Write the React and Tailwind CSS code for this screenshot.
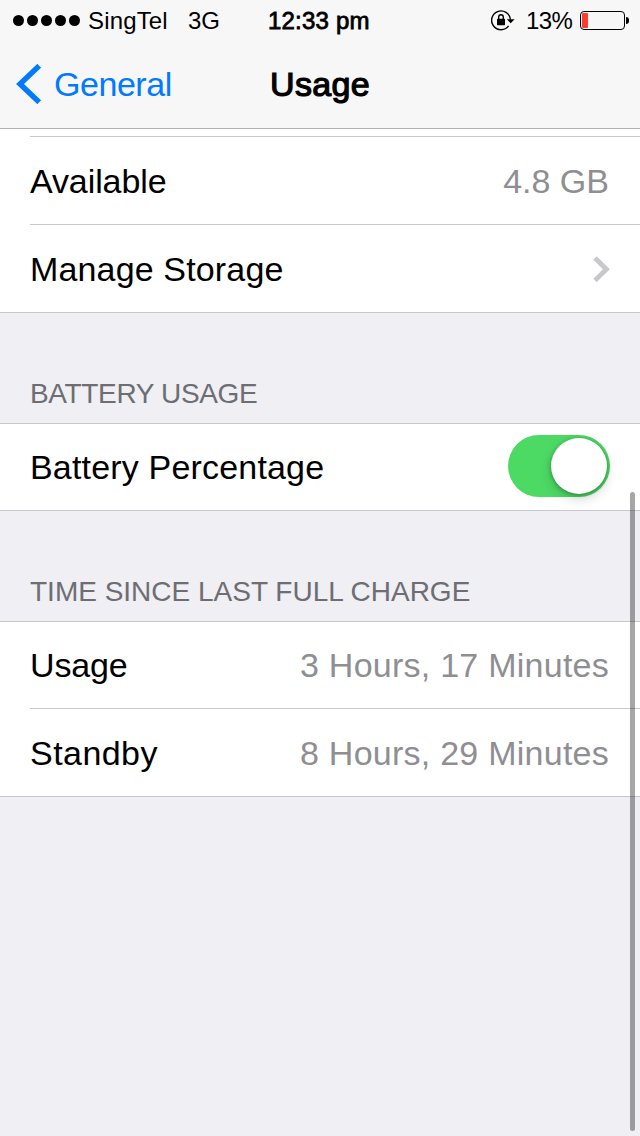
import React from 'react';

const StatusBar = () => (
  <div className="flex h-[41px] items-center text-[24px] leading-10">
    <div className="flex w-[268px] items-center pl-[13px]">
      <div className="flex gap-[3px]">
        {[1, 2, 3, 4, 5].map((n) => (
          <span key={n} className="h-[11px] w-[11px] rounded-full bg-black" />
        ))}
      </div>
      <span className="ml-[8px] w-[100px] pt-px tracking-[0.15px] whitespace-nowrap">SingTel</span>
      <span className="pt-px">3G</span>
    </div>
    <div className="w-[223px] pt-px tracking-[0.2px] whitespace-nowrap [-webkit-text-stroke:0.8px_black]">12:33 pm</div>
    <svg width="24" height="22" viewBox="0 0 24 22" fill="none">
      <path d="M17.6 15.9A9.4 9.4 0 1 1 19.4 9.5" stroke="#000" strokeWidth="1.4" />
      <path d="M15.8 9.2h7.8l-3.9 4z" fill="#000" />
      <rect x="6" y="8.8" width="8" height="6.4" rx="0.6" fill="#000" />
      <path d="M7.7 9.4V7a2.3 2.3 0 0 1 4.6 0v2.4" stroke="#000" strokeWidth="1.4" />
    </svg>
    <span className="ml-[11px] w-[54px] pt-px tracking-[-0.6px] whitespace-nowrap">13%</span>
    <div className="h-[19px] w-[45px] rounded-[4px] border border-black p-px">
      <div className="h-full w-[6px] rounded-[1px] bg-[#ff3b30]" />
    </div>
    <div className="ml-px h-[7px] w-[3px] rounded-r-[3px] bg-black" />
  </div>
);

const NavBar = () => (
  <div className="flex h-[86px] items-center">
    <button className="flex w-[270px] items-center pl-[16px] text-[#007aff]">
      <svg width="26" height="40" viewBox="0 0 26 40" fill="none">
        <path d="M23.2 1.8L4 20l19.2 18.2" stroke="currentColor" strokeWidth="5.4" />
      </svg>
      <span className="ml-[12px] text-[34px] leading-10 tracking-[-0.45px]">General</span>
    </button>
    <h1 className="text-[34px] leading-10 tracking-[0.35px] [-webkit-text-stroke:1.2px_black]">Usage</h1>
  </div>
);

const Row = ({ label, value, children, className = 'h-[86px]', labelClass = '', valueClass = '' }) => (
  <div className={`flex items-center justify-between pr-[31px] pl-[30px] ${className}`}>
    <span className={labelClass}>{label}</span>
    {value && <span className={`text-[#8e8e93] ${valueClass}`}>{value}</span>}
    {children}
  </div>
);

const Divider = () => <div className="ml-[30px] h-px bg-[#c8c7cc]" />;

const SectionTitle = ({ children, className = '' }) => (
  <h2 className={`h-[110px] pt-[61px] pl-[30px] text-[28px] leading-10 text-[#6d6d72] ${className}`}>{children}</h2>
);

const Toggle = () => (
  <div className="mb-[2px] -mr-px flex h-[62px] w-[102px] items-center justify-end rounded-full bg-[#4cd964] pr-[3px]">
    <div className="h-[56px] w-[56px] rounded-full bg-white shadow-[0_5px_12px_rgba(0,0,0,0.16),0_1px_4px_rgba(0,0,0,0.3)]" />
  </div>
);

const App = () => (
  <div className="relative h-[1136px] w-[640px] overflow-hidden bg-[#efeff4] font-['Liberation_Sans',sans-serif] text-[34px] leading-10 text-black">
    <header className="h-[129px] border-b border-[#b2b2b2] bg-[#f7f7f8]">
      <StatusBar />
      <NavBar />
    </header>

    <section className="border-b border-[#c8c7cc] bg-white pt-[7px]">
      <Divider />
      <Row label="Available" value="4.8 GB" className="h-[87px]" labelClass="tracking-[-0.1px]" />
      <Divider />
      <Row label="Manage Storage" className="h-[87px]" labelClass="tracking-[0.15px]">
        <svg className="-mr-px" width="17" height="26" viewBox="0 0 17 26" fill="none">
          <path d="M2 2L13.4 13.2L2 24.4" stroke="#c7c7cc" strokeWidth="4.8" />
        </svg>
      </Row>
    </section>

    <SectionTitle className="tracking-[-0.35px]">BATTERY USAGE</SectionTitle>
    <section className="border-y border-[#c8c7cc] bg-white">
      <Row label="Battery Percentage" labelClass="tracking-[0.18px]">
        <Toggle />
      </Row>
    </section>

    <SectionTitle>TIME SINCE LAST FULL CHARGE</SectionTitle>
    <section className="border-y border-[#c8c7cc] bg-white">
      <Row label="Usage" value="3 Hours, 17 Minutes" labelClass="tracking-[-0.15px]" valueClass="tracking-[0.25px]" />
      <Divider />
      <Row
        label="Standby"
        value="8 Hours, 29 Minutes"
        className="h-[87px]"
        labelClass="tracking-[0.45px]"
        valueClass="tracking-[0.25px]"
      />
    </section>

    {/* scroll indicator */}
    <div className="absolute top-[492px] right-[5px] h-[639px] w-[5px] rounded-full bg-black/35" />
  </div>
);

export default App;
